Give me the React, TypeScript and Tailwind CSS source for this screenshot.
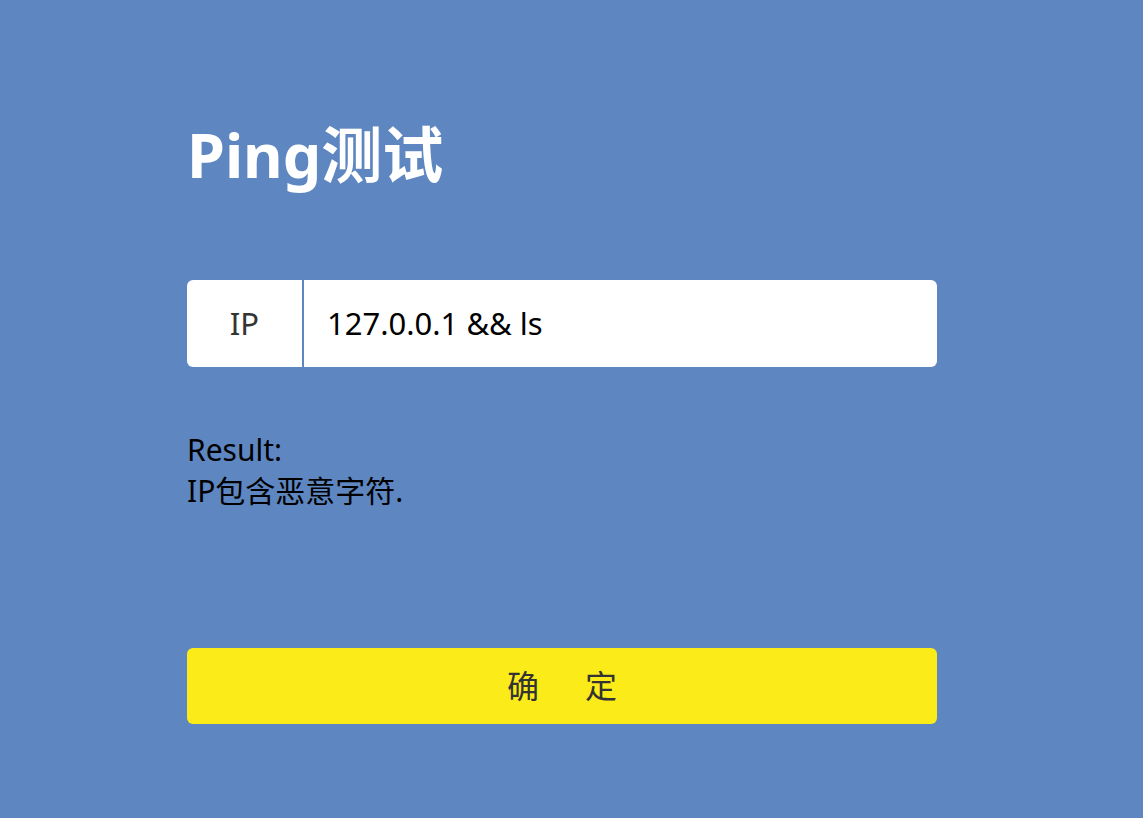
import React from "react";

const App = () => {
  return (
    <div
      className="w-full min-h-screen bg-[#5e86c1]"
      style={{ fontFamily: '"Noto Sans", "Noto Sans CJK SC", sans-serif' }}
    >
      <div className="w-[750px] ml-[187px] pt-[112px]">
        <h1 className="text-[61px] leading-[86px] font-bold text-white">Ping测试</h1>
        <div className="mt-[82px] flex h-[87px] rounded-[6px] bg-white overflow-hidden">
          <div className="w-[117px] flex items-center justify-center text-[31px] text-[#333] border-r-2 border-[#5e86c1]">
            IP
          </div>
          <div className="flex-1 flex items-center pl-[23px] text-[31px] text-black">
            127.0.0.1 &amp;&amp; ls
          </div>
        </div>
        <div className="mt-[62px] text-[30px] leading-[41px] text-black">
          <div>Result:</div>
          <div>IP包含恶意字符.</div>
        </div>
        <button className="mt-[137px] w-full h-[76px] rounded-[6px] bg-[#fbeb19] flex items-center justify-center gap-[46px] text-[32px] text-[#333]">
          <span>确</span>
          <span>定</span>
        </button>
      </div>
    </div>
  );
};

export default App;
